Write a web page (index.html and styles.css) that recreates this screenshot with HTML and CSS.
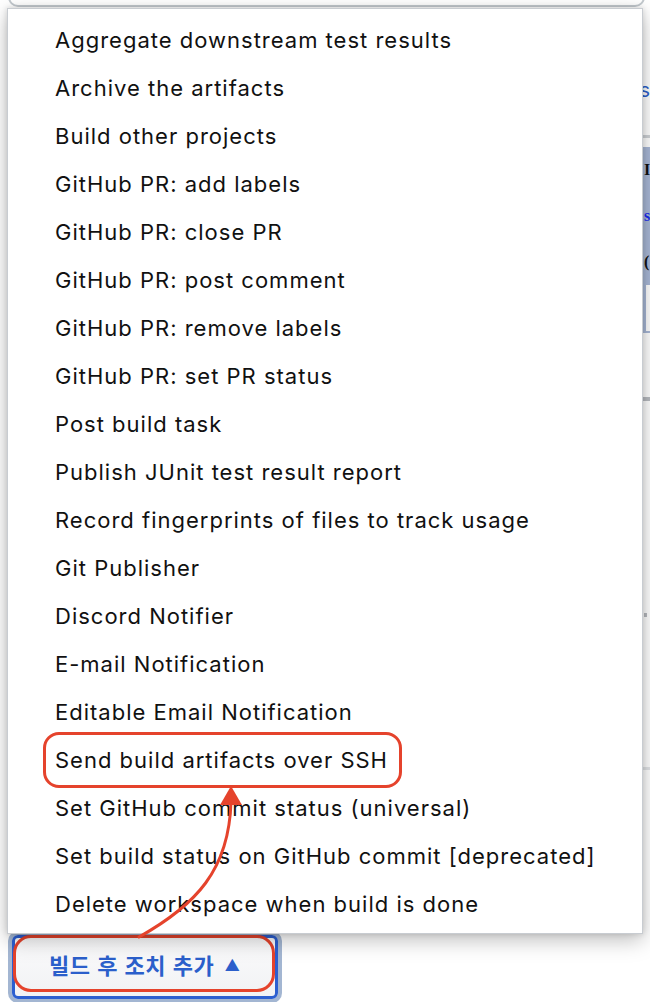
FILE: index.html
```html
<!DOCTYPE html>
<html lang="ko">
<head>
  <meta charset="UTF-8" />
  <title>빌드 후 조치 추가</title>
  <link rel="stylesheet" href="styles.css">
</head>
<body>
  <div class="page">
    <div class="field-edge"></div>
    <div class="link-row"><a href="#">s</a></div>
    <div class="rule"></div>
    <div class="block">
      <div class="block-line dark">I</div>
      <div class="block-line link">s</div>
      <div class="block-line dark">(</div>
      <div class="block-inner"></div>
    </div>
    <div class="rule thick"></div>
    <div class="spacer-a"></div>
    <div class="dot"></div>
    <div class="spacer-b"></div>
    <div class="rule light"></div>
    <div class="add-wrap">
      <button class="add-btn">빌드 후 조치 추가 <span class="caret">▲</span></button>
    </div>
  </div>

  <ul class="menu">
    <li>Aggregate downstream test results</li>
    <li>Archive the artifacts</li>
    <li>Build other projects</li>
    <li>GitHub PR: add labels</li>
    <li>GitHub PR: close PR</li>
    <li>GitHub PR: post comment</li>
    <li>GitHub PR: remove labels</li>
    <li>GitHub PR: set PR status</li>
    <li>Post build task</li>
    <li>Publish JUnit test result report</li>
    <li>Record fingerprints of files to track usage</li>
    <li>Git Publisher</li>
    <li>Discord Notifier</li>
    <li>E-mail Notification</li>
    <li>Editable Email Notification</li>
    <li><span class="mark">Send build artifacts over SSH</span></li>
    <li>Set GitHub commit status (universal)</li>
    <li>Set build status on GitHub commit [deprecated]</li>
    <li>Delete workspace when build is done</li>
  </ul>

  <!-- 주석: 화살표 -->
  <svg class="arrow" width="650" height="1002" viewBox="0 0 650 1002">
    <path d="M139 937 C 196 905, 229 870, 231 802" fill="none" stroke="#e5432c" stroke-width="3" stroke-linecap="round"/>
    <polygon points="231,786 220,805 242,805" fill="#e5432c"/>
  </svg>
</body>
</html>
```

FILE: styles.css
```css
html, body {
  margin: 0;
  padding: 0;
  height: 100%;
  overflow: hidden;
}

body {
  position: relative;
  background: #fff;
  font-family: Inter, "Noto Sans", "Noto Sans CJK KR", sans-serif;
  color: #111;
}

/* фон страницы за меню */
.page {
  padding-left: 8px;
  display: flex;
  flex-direction: column;
}

.field-edge {
  height: 30px;
  margin-top: -27px;
  margin-right: 5px;
  border: 2px solid #c3c9ce;
  border-radius: 10px;
  background: #fff;
}

.link-row {
  height: 48px;
  margin-top: 59px;
  text-align: right;
  line-height: 48px;
  font-size: 20px;
}

.link-row a {
  color: #2b5fcb;
  text-decoration: none;
}

.rule {
  height: 3px;
  background: #cfd2d6;
  margin-top: 21px;
}

.block {
  margin-top: 9px;
  margin-left: 635px;
  height: 186px;
  background: #a9b8d7;
  font-family: "Liberation Serif", serif;
  font-size: 16px;
  font-weight: bold;
}

.block-line {
  height: 46px;
  line-height: 46px;
  padding-left: 1px;
  white-space: nowrap;
}

.block-line.dark { color: #111; }
.block-line.link { color: #1a2cf0; }

.block-inner {
  height: 46px;
  margin-left: 3px;
  background: #fff;
}

.rule.thick {
  height: 4px;
  margin-top: 64px;
  background: #b9bcc1;
}

.spacer-a { height: 212px; }

.dot {
  height: 4px;
  margin-left: 636px;
  width: 3px;
  background: #b7babf;
}

.spacer-b { height: 150px; }

.rule.light {
  height: 3px;
  margin-top: 0;
  background: #e2e4e7;
}

.add-wrap {
  margin-top: 165px;
  padding-left: 4px;
}

.add-btn {
  position: relative;
  width: 266px;
  height: 64px;
  border: 3px solid #2c5fd0;
  border-radius: 6px;
  background: linear-gradient(#fbfbfc, #f1f2f4);
  box-shadow: 0 0 0 4px #a3b6d2;
  color: #2b5fcb;
  font-family: "Noto Sans CJK KR", "Noto Sans", sans-serif;
  font-size: 22px;
  font-weight: 600;
  letter-spacing: 0.5px;
  text-align: left;
  padding: 0 0 6px 34px;
  cursor: pointer;
}

.add-btn .caret {
  font-size: 15px;
  vertical-align: 3px;
  margin-left: 4px;
}

.add-btn::after {
  content: '';
  position: absolute;
  left: -2px;
  top: -3px;
  right: 0;
  bottom: 4px;
  border: 3px solid #e5432c;
  border-radius: 18px;
}

/* выпадающее меню */
.menu {
  position: absolute;
  left: 7px;
  top: 8px;
  width: 634px;
  margin: 0;
  padding: 7px 0 5px;
  list-style: none;
  background: #fff;
  border: 1px solid #c8ccd1;
  box-shadow: 0 6px 20px rgba(0, 0, 0, 0.26), 0 0 6px rgba(0, 0, 0, 0.14);
}

.menu li {
  height: 48px;
  line-height: 48px;
  padding-left: 47px;
  font-size: 22px;
  letter-spacing: 1px;
  white-space: nowrap;
}

.mark {
  position: relative;
  display: inline-block;
}

.mark::after {
  content: '';
  position: absolute;
  left: -12px;
  right: -14px;
  top: -4px;
  bottom: -4px;
  border: 3px solid #e5432c;
  border-radius: 16px;
}

.arrow {
  position: absolute;
  left: 0;
  top: 0;
  pointer-events: none;
}
```
